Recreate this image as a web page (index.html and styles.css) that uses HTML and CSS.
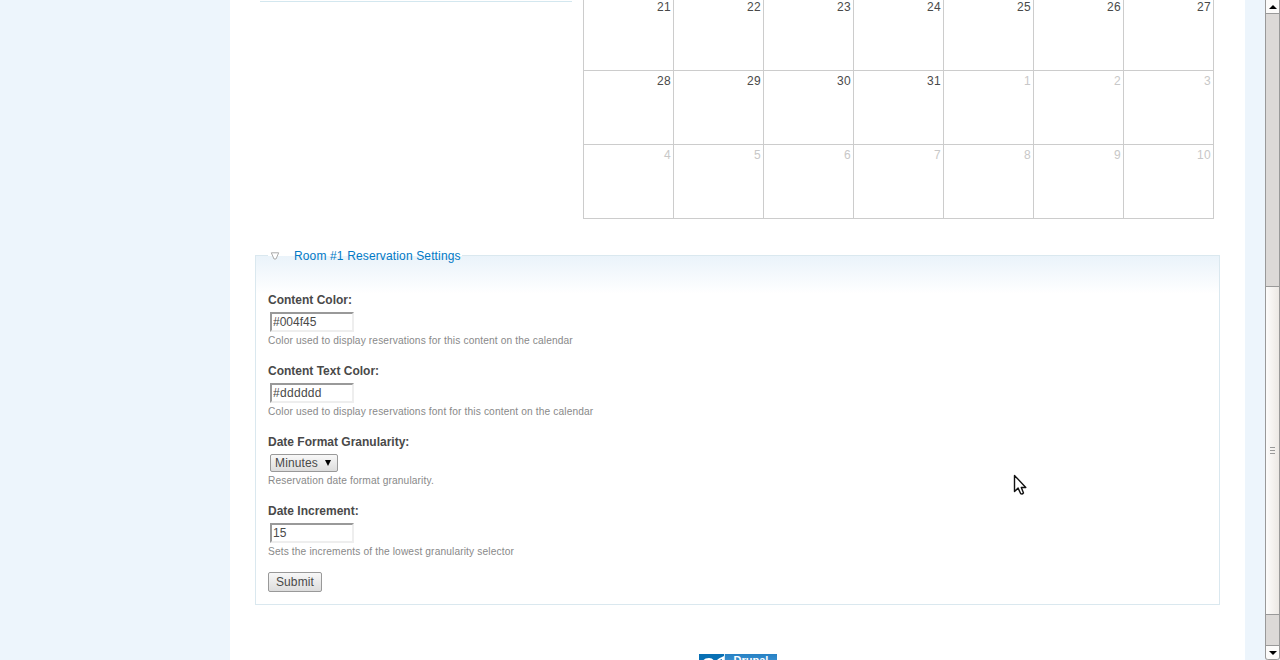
FILE: index.html
```html
<!DOCTYPE html>
<html lang="en">
<head>
<meta charset="utf-8">
<title>Room #1</title>
<link rel="stylesheet" href="styles.css">
</head>
<body>
<main class="page">
  <div class="upper">
    <div class="rule"></div>
    <div class="calendar">
      <div>21</div><div>22</div><div>23</div><div>24</div><div>25</div><div>26</div><div>27</div>
      <div>28</div><div>29</div><div>30</div><div>31</div><div class="other">1</div><div class="other">2</div><div class="other">3</div>
      <div class="other">4</div><div class="other">5</div><div class="other">6</div><div class="other">7</div><div class="other">8</div><div class="other">9</div><div class="other">10</div>
    </div>
  </div>
  <form class="settings">
    <div class="legend">
      <svg class="twisty" width="10" height="8" viewBox="0 0 10 8"><path d="M1.3 .8h7.4L6 7H4z" fill="#fff" stroke="#aaa"/></svg>
      <a>Room #1 Reservation Settings</a>
    </div>
    <div class="item">
      <label>Content Color:</label>
      <input class="field" type="text" value="#004f45">
      <p class="description">Color used to display reservations for this content on the calendar</p>
    </div>
    <div class="item">
      <label>Content Text Color:</label>
      <input class="field field-wide" type="text" value="#dddddd">
      <p class="description">Color used to display reservations font for this content on the calendar</p>
    </div>
    <div class="item item-select">
      <label>Date Format Granularity:</label>
      <div class="select"><span>Minutes</span><svg width="6" height="6" viewBox="0 0 6 6"><path d="M0 0h6L3 6z"/></svg></div>
      <p class="description">Reservation date format granularity.</p>
    </div>
    <div class="item">
      <label>Date Increment:</label>
      <input class="field" type="text" value="15">
      <p class="description">Sets the increments of the lowest granularity selector</p>
    </div>
    <button class="submit" type="button">Submit</button>
  </form>
  <div class="badge">
    <div class="badge-icon"><svg width="25" height="15" viewBox="0 0 25 15"><path d="M4 15V7q1-3 6-3 4 0 5 3 1 1 3-1 2-2 5-3l2-1v13z" fill="#fff"/><path d="M7 8q2-3 5 0v7H7zM18 7l5-2v10h-5z" fill="#0870b4"/></svg></div>
    <div class="badge-text">Drupal</div>
  </div>
</main>
<div class="scrollbar">
  <div class="arrow arrow-up"><svg width="8" height="4" viewBox="0 0 8 4"><path d="M0 4h8L4 0z"/></svg></div>
  <div class="thumb"><i></i><i></i><i></i></div>
  <div class="arrow arrow-down"><svg width="8" height="4" viewBox="0 0 8 4"><path d="M0 0h8L4 4z"/></svg></div>
</div>
<svg class="cursor" width="14" height="22" viewBox="0 0 14 22"><path d="M1.5 1.5v16l3.6-3.4 2.6 5.6q1.6 1 2.8-.8L8.3 13.5h4.5z" fill="#fff" stroke="#111" stroke-width="1.4" stroke-linejoin="round"/></svg>
</body>
</html>
```
FILE: styles.css
```css
* { box-sizing: border-box; }
body {
  display: flex;
  height: 660px;
  margin: 0;
  overflow: hidden;
  background: #edf5fc;
  color: #494949;
  font: 12px/18px "Liberation Sans", Arial, sans-serif;
}
svg { display: block; }
.page {
  width: 1015px;
  height: 660px;
  margin: 0 20px 0 230px;
  padding: 0 25px;
  background: #fff;
  overflow: hidden;
}
.upper { display: flex; height: 255px; padding-left: 5px; }
.rule { width: 312px; height: 2px; margin-right: 11px; border-bottom: 1px solid #d3e7ef; }
.calendar {
  display: grid;
  grid-template-columns: repeat(7, 90px);
  grid-auto-rows: 74px;
  width: 631px;
  height: 222px;
  margin-top: -3px;
  border-left: 1px solid #ccc;
}
.calendar div {
  padding: 1px 2px 0 0;
  border: solid #ccc;
  border-width: 0 1px 1px 0;
  letter-spacing: .3px;
  text-align: right;
}
.calendar .other { color: #c8c8c8; }
.settings {
  width: 965px;
  height: 350px;
  padding: 0 12px;
  border: 1px solid #dae8ef;
  background: linear-gradient(#eaf3fa, #fff 38px) no-repeat;
}
.legend {
  display: flex;
  align-items: center;
  width: 194px;
  height: 18px;
  margin: -9px 0 26px;
  color: #027ac6;
  letter-spacing: .14px;
  background: linear-gradient(#fff 9px, transparent 9px);
}
.twisty { margin: 0 14px 0 2px; }
.item { height: 71px; }
.item-select { height: 69px; }
.item label { display: block; font-weight: bold; }
.field {
  display: block;
  width: 84px;
  height: 20px;
  margin: 3px 2px 0;
  padding: 1px;
  border: 2px solid;
  border-color: #999 #eee #eee #999;
  background: #fff;
  color: #494949;
  font: inherit;
}
.field-wide { letter-spacing: .3px; }
.description {
  margin: 1px 0 0;
  color: #898989;
  font-size: 10.2px;
  letter-spacing: .13px;
  line-height: 16px;
}
.select {
  display: flex;
  align-items: center;
  justify-content: space-between;
  width: 68px;
  height: 18px;
  margin: 3px 2px 0;
  padding: 0 6px 0 4px;
  border: 1px solid #999;
  border-radius: 2px;
  background: linear-gradient(#f8f8f8, #ddd);
  letter-spacing: .14px;
}
.select svg { fill: #000; }
.submit {
  display: block;
  width: 54px;
  height: 20px;
  margin: -1px 0 0;
  padding: 0;
  border: 1px solid #999;
  border-radius: 2px;
  background: linear-gradient(#f8f8f8, #ddd);
  color: #494949;
  font: inherit;
  letter-spacing: .14px;
}
.badge { display: flex; width: 78px; height: 15px; margin: 49px 0 0 444px; }
.badge-icon { width: 26px; background: #0870b4; border-right: 1px solid #cce5f5; }
.badge-text {
  width: 52px;
  background: linear-gradient(#2681c4, #4b9edc);
  color: #fff;
  font-size: 11px;
  font-weight: bold;
  line-height: 13px;
  text-align: center;
}
.scrollbar {
  display: flex;
  flex-direction: column;
  width: 15px;
  height: 660px;
  border: solid #999;
  border-width: 0 1px;
  border-radius: 0 0 3px 3px;
  background: #dcd9d7;
}
.arrow { display: flex; align-items: center; justify-content: center; height: 14px; background: #fcfbfa; }
.arrow-up { border-bottom: 1px solid #999; }
.arrow-down { height: 15px; border: solid #999; border-width: 1px 0; border-radius: 0 0 3px 3px; }
.thumb {
  display: flex;
  flex-direction: column;
  align-items: center;
  justify-content: center;
  gap: 2px;
  height: 329px;
  margin: 272px 0 30px;
  border: solid #999;
  border-width: 1px 0;
  background: linear-gradient(90deg, #fdfcfb, #ece8e4);
}
.thumb i { width: 5px; height: 1px; background: #999; }
.cursor { position: absolute; left: 1013px; top: 474px; }
```
